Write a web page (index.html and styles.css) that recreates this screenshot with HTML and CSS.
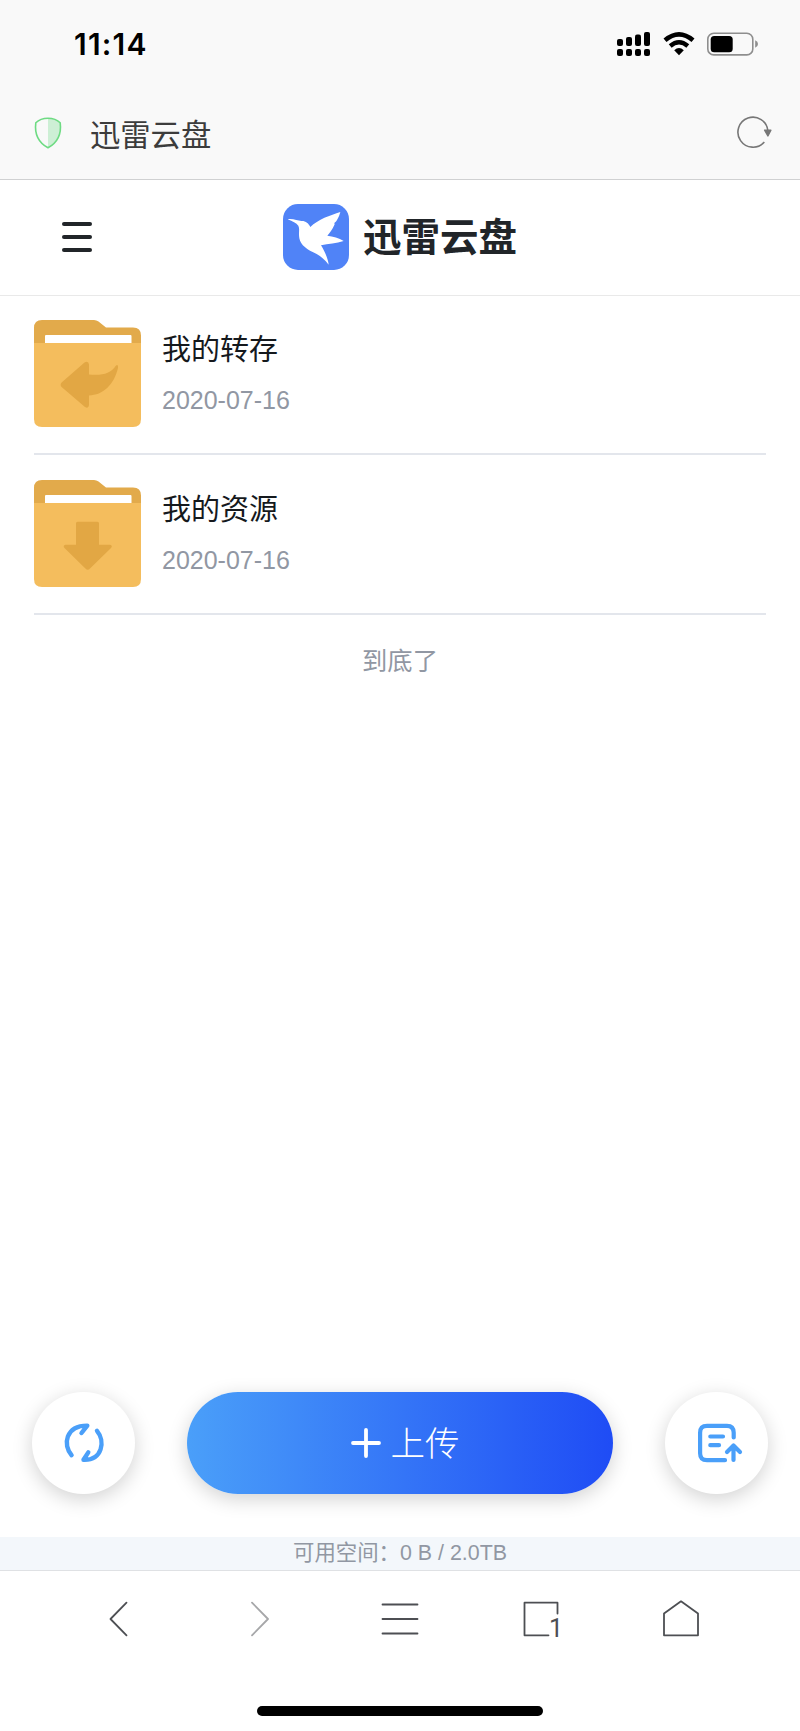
FILE: index.html
```html
<!DOCTYPE html>
<html lang="zh-CN">
<head>
    <meta charset="UTF-8">
    <meta name="viewport" content="width=device-width, initial-scale=1.0">
    <title>迅雷云盘</title>
    <link rel="stylesheet" href="styles.css">
</head>
<body>
    <div class="status-bar">
        <span class="time">11:14</span>
        <div class="status-icons">
            <svg class="signal" width="33" height="24" viewBox="0 0 33 24">
                <rect x="0" y="7" width="6" height="7" rx="2"/>
                <rect x="9" y="5" width="6" height="9" rx="2"/>
                <rect x="18" y="2.5" width="6" height="11.5" rx="2"/>
                <rect x="27" y="0" width="6" height="14" rx="2"/>
                <rect x="0" y="17" width="6" height="7" rx="2"/>
                <rect x="9" y="17" width="6" height="7" rx="2"/>
                <rect x="18" y="17" width="6" height="7" rx="2"/>
                <rect x="27" y="17" width="6" height="7" rx="2"/>
            </svg>
            <svg class="wifi" width="32" height="24" viewBox="0 0 32 24">
                <path d="M2 8.3Q16 -3.5 30 8.3" fill="none" stroke="#000" stroke-width="4.6"/>
                <path d="M7.2 14Q16 6.6 24.8 14" fill="none" stroke="#000" stroke-width="4.4"/>
                <path d="M11.2 18.2Q16 14 20.8 18.2L16 23.2Z"/>
            </svg>
            <svg class="battery" width="51" height="24" viewBox="0 0 51 24">
                <rect x="0.8" y="1.3" width="45" height="21.6" rx="6" fill="none" stroke="#8e8e8e" stroke-width="1.6"/>
                <rect x="3.7" y="4" width="22" height="16.3" rx="3.5"/>
                <path d="M48.2 8.2Q51 9.5 51 12T48.2 15.8Z" fill="#8e8e8e"/>
            </svg>
        </div>
    </div>

    <div class="browser-bar">
        <svg width="28" height="32" viewBox="0 0 28 32">
            <path d="M14 1.6C19 1.6 23 3 26.2 6.3C27.5 17 23 25.5 14 31Z" fill="#cdefd5"/>
            <path d="M14 1.2C9 1.2 5 2.6 1.8 5.8C.4 17 5 25.8 14 30.8C23 25.8 27.6 17 26.2 5.8C23 2.6 19 1.2 14 1.2Z" fill="none" stroke="#6edb83" stroke-width="1.6" stroke-linejoin="round"/>
        </svg>
        <span class="browser-title">迅雷云盘</span>
        <svg width="35" height="33" viewBox="0 0 35 33">
            <path d="M27.3 26A15 15 0 1 1 30.9 15" fill="none" stroke="#777" stroke-width="1.6"/>
            <path d="M27.6 14.2H33.9L30.9 20Z" fill="#777" stroke="#777" stroke-width="1.4" stroke-linejoin="round"/>
        </svg>
    </div>

    <header class="app-header">
        <div class="menu-button">
            <span></span>
            <span></span>
            <span></span>
        </div>
        <svg class="logo" width="66" height="66" viewBox="0 0 198 198">
            <rect width="198" height="198" rx="45" fill="#5083f7"/>
            <path d="M14 46C30 43 44 51 55 51C67 50 77 58 82 69C105 46 142 34 172 24C168 39 161 53 154 57L155 61C148 77 140 87 133 95C150 97 168 101 182 111C160 119 136 119 114 124C125 142 135 163 137 182C126 168 114 157 101 150C72 137 53 124 49 103C46 84 51 76 46 65C40 56 29 53 14 46Z" fill="#fff"/>
        </svg>
        <h1>迅雷云盘</h1>
    </header>

    <main class="file-list">
        <div class="file-item">
            <svg class="folder" width="107" height="107" viewBox="0 0 107 107">
                <path d="M0 30V8Q0 0 8 0H60Q62.5 0 64.5 1.5L72 7.5H99Q107 7.5 107 15.5V30Z" fill="#e2aa4b"/>
                <rect x="11" y="15" width="86.5" height="10" rx="1" fill="#fff"/>
                <path d="M0 23H107V99Q107 107 99 107H8Q0 107 0 99Z" fill="#f4bd5d"/>
                <path d="M27.6 62.5L50.5 42.5Q54.5 40.5 55 44.5V54.5C69 55.5 76 54 82 45.5Q84.5 44 84 48C80 65 69 75 55 75.5V85Q54.5 89 51 87L27.6 67Q25.6 64.8 27.6 62.5Z" fill="#e2a744"/>
            </svg>
            <div class="file-info">
                <div class="file-name">我的转存</div>
                <div class="file-date">2020-07-16</div>
            </div>
        </div>
        <div class="file-item">
            <svg class="folder" width="107" height="107" viewBox="0 0 107 107">
                <path d="M0 30V8Q0 0 8 0H60Q62.5 0 64.5 1.5L72 7.5H99Q107 7.5 107 15.5V30Z" fill="#e2aa4b"/>
                <rect x="11" y="15" width="86.5" height="10" rx="1" fill="#fff"/>
                <path d="M0 23H107V99Q107 107 99 107H8Q0 107 0 99Z" fill="#f4bd5d"/>
                <path d="M43.5 41.7H63.5Q65 41.7 65 43.2V64.7H76Q79 65.5 77 68L56 88.5Q53.7 91 51.4 88.5L30.5 68Q28.5 65.5 31.5 64.7H42V43.2Q42 41.7 43.5 41.7Z" fill="#e2a744"/>
            </svg>
            <div class="file-info">
                <div class="file-name">我的资源</div>
                <div class="file-date">2020-07-16</div>
            </div>
        </div>
        <p class="list-end">到底了</p>
    </main>

    <div class="actions">
        <button class="round-button">
            <svg width="42" height="42" viewBox="0 0 42 42" fill="none" stroke="#4a9ff9" stroke-width="4.4" stroke-linecap="round" stroke-linejoin="round">
                <path d="M8.6 33.2C-.5 23 2.5 3.5 24.3 3.6L18.5 11"/>
                <path d="M34 8.8C42.5 19 39.5 38.5 20.5 37.8L25.3 30.4"/>
            </svg>
        </button>
        <button class="upload-button">
            <svg width="30" height="30" viewBox="0 0 30 30" stroke="#fff" stroke-width="3.8" stroke-linecap="round">
                <path d="M2 15H28M15 2V28"/>
            </svg>
            <span>上传</span>
        </button>
        <button class="round-button">
            <svg class="transfer" width="46" height="42" viewBox="0 0 46 42" fill="none" stroke="#4a9ff9" stroke-width="4.2" stroke-linecap="round" stroke-linejoin="round">
                <path d="M28 38.2H10Q3.1 38.2 3.1 31.3V10.8Q3.1 3.9 10 3.9H30Q36.7 3.9 36.7 10.8V15.5"/>
                <path d="M13.3 14.5H26M13.3 23.2H22"/>
                <path d="M36.5 38V23.5M30 30L36.5 23.5L43 30"/>
            </svg>
        </button>
    </div>

    <div class="space-bar">可用空间：0 B / 2.0TB</div>

    <nav class="bottom-nav">
        <svg width="40" height="40" viewBox="0 0 40 40">
            <path d="M27.5 3.7L11.5 20L27.5 36.3"/>
        </svg>
        <svg class="disabled" width="40" height="40" viewBox="0 0 40 40">
            <path d="M12 3.7L28 20L12 36.3"/>
        </svg>
        <svg width="40" height="40" viewBox="0 0 40 40">
            <path d="M2.5 5.5H37.5M2.5 20H37.5M2.5 34.5H37.5"/>
        </svg>
        <svg width="40" height="40" viewBox="0 0 40 40">
            <path d="M36.5 14.5V3.7H3.5V36.3H27.5"/>
            <text x="28" y="37.5">1</text>
        </svg>
        <svg width="40" height="40" viewBox="0 0 40 40">
            <path d="M3 14.5L20 2.3L37 14.5V36.3H3Z"/>
        </svg>
    </nav>
    <div class="home-indicator"></div>
</body>
</html>
```

FILE: styles.css
```css
* {
    box-sizing: border-box;
}
body {
    margin: 0;
    height: 1731px;
    display: flex;
    flex-direction: column;
    background: #fff;
    color: #15191d;
    font-family: "Liberation Sans", "Noto Sans CJK SC", sans-serif;
}
svg {
    display: block;
    flex: none;
    overflow: visible;
}
.status-bar {
    height: 88px;
    padding: 0 42px 0 74px;
    display: flex;
    align-items: center;
    justify-content: space-between;
    background: #f9f9f9;
}
.time {
    font-family: Inter, sans-serif;
    font-size: 30px;
    font-weight: 600;
    letter-spacing: 1.2px;
    color: #000;
}
.status-icons {
    display: flex;
    align-items: center;
}
.wifi {
    margin-left: 13px;
}
.battery {
    margin-left: 12px;
}
.browser-bar {
    height: 92px;
    padding: 0 28px 2px 34px;
    display: flex;
    align-items: center;
    background: #f9f9f9;
    border-bottom: 1px solid #d0d1d2;
}
.browser-title {
    flex: 1;
    margin: 1px 0 0 28px;
    font-size: 30.3px;
    color: #3c3c3c;
}

/* app header */
.app-header {
    height: 116px;
    padding: 0 62px 2px;
    display: flex;
    align-items: center;
    border-bottom: 1px solid #e9e9e9;
}
.menu-button {
    width: 30px;
    display: flex;
    flex-direction: column;
    gap: 9px;
}
.menu-button span {
    height: 4px;
    border-radius: 2px;
    background: #212529;
}
.logo {
    margin: 0 14px 0 191px;
}
h1 {
    margin: 2px 0 0;
    font-size: 38.5px;
    font-weight: bold;
    line-height: 50px;
    color: #212529;
}

/* file list */
.file-list {
    flex: 1;
    padding: 0 34px;
}
.file-item {
    height: 159px;
    padding-top: 24px;
    display: flex;
    border-bottom: 2px solid #e3e6ec;
}
.file-item + .file-item {
    height: 160px;
    padding-top: 25px;
}
.file-info {
    margin: 1px 0 0 21px;
}
.file-name {
    height: 59px;
    line-height: 59px;
    font-size: 29px;
}
.file-date {
    line-height: 41px;
    font-size: 25px;
    color: #9197a3;
}
.list-end {
    margin: 28px 0 0;
    text-align: center;
    line-height: 36px;
    font-size: 25.3px;
    color: #9197a3;
}

/* floating buttons */
.actions {
    padding: 0 32px 43px;
    display: flex;
    justify-content: space-between;
}
.actions button {
    height: 102.5px;
    padding: 0;
    display: flex;
    align-items: center;
    justify-content: center;
    border: none;
    border-radius: 52px;
    box-shadow: 0 5px 20px rgba(0, 0, 0, 0.18);
    font-family: inherit;
}
.actions .round-button {
    width: 103px;
    background: #fff;
}
.transfer {
    margin-left: 7px;
}
.actions .upload-button {
    width: 426px;
    padding-left: 10px;
    gap: 10px;
    background: linear-gradient(to right, #4a9ff9, #1f4cf5);
    color: #fff;
    font-size: 34.5px;
    font-weight: 300;
}
.upload-button span {
    margin-top: -3px;
}

.space-bar {
    height: 34px;
    line-height: 33px;
    text-align: center;
    background: #f3f7fb;
    border-bottom: 1px solid #dfe1e4;
    font-size: 21.4px;
    color: #9197a3;
}

/* browser navigation */
.bottom-nav {
    height: 135px;
    padding: 28px 99px 0;
    display: flex;
    justify-content: space-between;
}
.bottom-nav path {
    fill: none;
    stroke: #4d4f53;
    stroke-width: 1.8;
    stroke-linecap: round;
    stroke-linejoin: round;
}
.bottom-nav .disabled path {
    stroke: #a6a7a9;
}
.bottom-nav text {
    font-family: Roboto, sans-serif;
    font-size: 25px;
    fill: #4d4f53;
}
.home-indicator {
    width: 286px;
    height: 10px;
    margin: 0 auto 15px;
    border-radius: 5px;
    background: #000;
}
```
